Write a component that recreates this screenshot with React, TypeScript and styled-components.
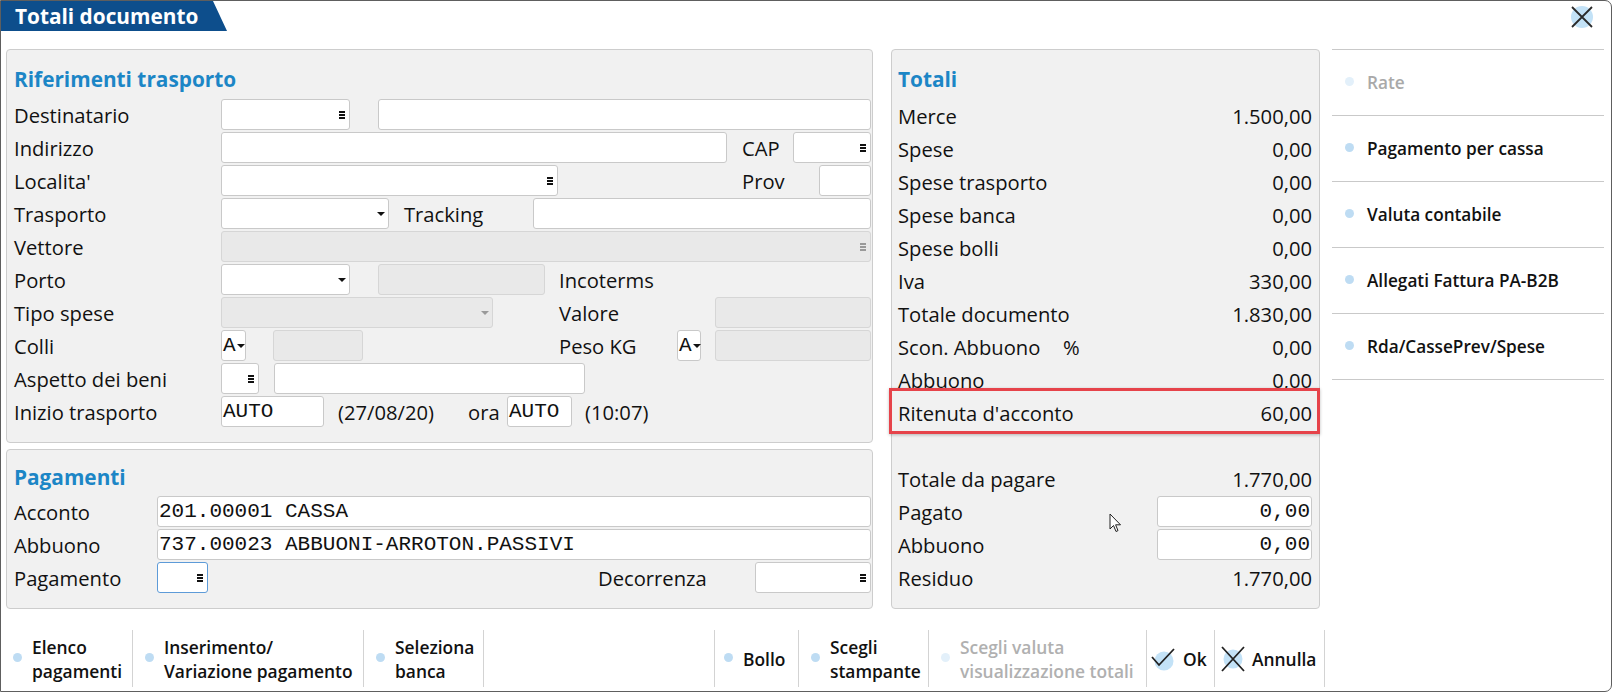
import React from 'react';
import styled, { createGlobalStyle, css } from 'styled-components';

const SANS = '"Open Sans", "Noto Sans", sans-serif';
const MONO = '"Liberation Mono", "DejaVu Sans Mono", monospace';
const BLUE = '#1c86c6';
const DOT = '#bedcf3';

const GlobalStyle = createGlobalStyle`
  html, body { margin: 0; padding: 0; background: #fff; }
  body { font-family: ${SANS}; color: #111; }
  #root { width: 1612px; height: 692px; }
`;

const Window = styled.div`
  box-sizing: border-box;
  width: 1612px;
  height: 692px;
  border: 1px solid #5e5e5e;
  border-radius: 0 7px 7px 0;
  background: #fff;
  display: flex;
  flex-direction: column;
`;

const Header = styled.div`
  height: 48px;
  display: flex;
  justify-content: space-between;
  align-items: flex-start;
`;

const TitleTab = styled.div`
  width: 226px;
  height: 30px;
  background: #0d4e8c;
  clip-path: polygon(0 0, 212px 0, 100% 100%, 0 100%);
  color: #fff;
  font-weight: 700;
  font-size: 20.8px;
  line-height: 30px;
  padding-left: 14px;
  box-sizing: border-box;
  white-space: nowrap;
`;

const CloseButton = styled.div`
  width: 24px;
  height: 24px;
  margin: 4px 17px 0 0;
`;

const Main = styled.div`
  height: 560px;
  display: flex;
  padding-left: 5px;
`;

const LeftColumn = styled.div`
  width: 867px;
  display: flex;
  flex-direction: column;
  gap: 6px;
`;

const Panel = styled.div<{ $h: number; $w?: number }>`
  box-sizing: border-box;
  height: ${({ $h }) => $h}px;
  ${({ $w }) => ($w ? `width: ${$w}px;` : '')}
  border: 1px solid #cdcdcd;
  border-radius: 4px;
  background: #f1f1f1;
  padding: 0 1px 0 7px;
  position: relative;
`;

const TotalsPanel = styled(Panel)`
  margin-left: 18px;
  padding: 0 7px 0 6px;
`;

const SectionTitle = styled.div<{ $tight?: boolean }>`
  color: ${BLUE};
  font-weight: 700;
  font-size: 20.8px;
  height: 28px;
  line-height: 28px;
  padding-top: ${({ $tight }) => ($tight ? 13 : 15)}px;
  margin-bottom: ${({ $tight }) => ($tight ? 5 : 6)}px;
`;

const Rows = styled.div`
  display: flex;
  flex-direction: column;
  gap: 2px;
`;

const Row = styled.div`
  display: flex;
  align-items: center;
  height: 31px;
`;

const Label = styled.div<{ $w?: number; $ml?: number }>`
  ${({ $w }) => ($w ? `width: ${$w}px;` : '')}
  ${({ $ml }) => ($ml ? `margin-left: ${$ml}px;` : '')}
  flex-shrink: 0;
  font-size: 20.2px;
  white-space: nowrap;
`;

const Box = styled.div<{ $w: number; $ml?: number; $off?: boolean; $focus?: boolean; $right?: boolean }>`
  box-sizing: border-box;
  width: ${({ $w }) => $w}px;
  ${({ $ml }) => ($ml ? `margin-left: ${$ml}px;` : '')}
  height: 31px;
  flex-shrink: 0;
  border: 1px solid #c9c9c9;
  border-radius: 3px;
  background: #fff;
  display: flex;
  align-items: center;
  justify-content: ${({ $right }) => ($right ? 'flex-end' : 'flex-start')};
  padding: 0 1px;
  font-family: ${MONO};
  font-size: 21px;
  color: #111;
  ${({ $off }) =>
    $off &&
    css`
      background: #e9e9e9;
      border-color: #d6d6d6;
      color: #9a9a9a;
    `}
  ${({ $focus }) =>
    $focus &&
    css`
      border-color: #5d9bd8;
    `}
`;

const Trail = styled.span`
  margin-left: auto;
  margin-right: 3px;
  display: flex;
`;

const Caret = styled.span<{ $tight?: boolean }>`
  display: flex;
  margin-left: ${({ $tight }) => ($tight ? '1px' : 'auto')};
  margin-right: ${({ $tight }) => ($tight ? 0 : 2)}px;
`;

const Lookup = ({ off }: { off?: boolean }) => (
  <Trail>
    <svg width="6" height="8" viewBox="0 0 6 8">
      <g fill={off ? '#9a9a9a' : '#111'}>
        <rect x="0" y="0" width="6" height="2" />
        <rect x="0" y="3" width="6" height="2" />
        <rect x="0" y="6" width="6" height="2" />
      </g>
    </svg>
  </Trail>
);

const Arrow = ({ off, tight }: { off?: boolean; tight?: boolean }) => (
  <Caret $tight={tight}>
    <svg width="8" height="4" viewBox="0 0 8 4">
      <polygon points="0,0 8,0 4,4" fill={off ? '#9a9a9a' : '#111'} />
    </svg>
  </Caret>
);

const Plain = styled.div<{ $w?: number; $ml?: number }>`
  ${({ $w }) => ($w ? `width: ${$w}px;` : '')}
  ${({ $ml }) => ($ml ? `margin-left: ${$ml}px;` : '')}
  flex-shrink: 0;
  font-size: 20.2px;
  white-space: nowrap;
`;

const TotalRow = styled.div<{ $mark?: boolean }>`
  height: 33px;
  display: flex;
  align-items: center;
  justify-content: space-between;
  font-size: 20.2px;
  position: relative;
  ${({ $mark }) =>
    $mark &&
    css`
      &::after {
        content: '';
        position: absolute;
        left: -9px;
        right: -8px;
        top: -8px;
        bottom: -5px;
        border: 3px solid #e6434a;
        box-shadow: 0 1px 3px rgba(0, 0, 0, 0.25);
      }
    `}
`;

const TotalLabel = styled.span`
  display: flex;
  white-space: nowrap;
`;

const Pct = styled.span`
  position: absolute;
  left: 165px;
`;

const Cursor = styled.div`
  position: absolute;
  left: 217px;
  top: 463px;
`;

const Menu = styled.div`
  width: 272px;
  margin-left: 12px;
  border-top: 1px solid #c9c9c9;
  align-self: flex-start;
`;

const MenuItem = styled.div<{ $off?: boolean }>`
  height: 65px;
  border-bottom: 1px solid #c9c9c9;
  display: flex;
  align-items: center;
  gap: 13px;
  padding-left: 13px;
  font-size: 17.2px;
  font-weight: 600;
  color: ${({ $off }) => ($off ? '#a9a9a9' : '#111')};
`;

const Dot = styled.span<{ $off?: boolean }>`
  width: 9px;
  height: 9px;
  border-radius: 50%;
  background: ${({ $off }) => ($off ? '#e3f0fa' : DOT)};
  flex-shrink: 0;
  margin-top: -3px;
`;

const Toolbar = styled.div`
  height: 57px;
  margin-top: 21px;
  display: flex;
`;

const ToolGroup = styled.div<{ $ml?: number }>`
  display: flex;
  ${({ $ml }) => ($ml ? `margin-left: ${$ml}px; border-left: 1px solid #d3d3d3;` : '')}
`;

const ToolItem = styled.div<{ $w: number; $off?: boolean; $pl?: number }>`
  box-sizing: border-box;
  width: ${({ $w }) => $w}px;
  border-right: 1px solid #d3d3d3;
  display: flex;
  align-items: center;
  gap: 10px;
  padding-left: ${({ $pl }) => $pl ?? 12}px;
  font-size: 17.4px;
  font-weight: 600;
  line-height: 24px;
  white-space: nowrap;
  color: ${({ $off }) => ($off ? '#b0b0b0' : '#111')};
`;

const IconGap = styled.span`
  display: flex;
  margin-right: -4px;
`;

const leftRows = (
  <Rows>
    <Row>
      <Label $w={207}>Destinatario</Label>
      <Box $w={129}><Lookup /></Box>
      <Box $w={493} $ml={28} />
    </Row>
    <Row>
      <Label $w={207}>Indirizzo</Label>
      <Box $w={506} />
      <Label $w={51} $ml={15}>CAP</Label>
      <Box $w={78}><Lookup /></Box>
    </Row>
    <Row>
      <Label $w={207}>Localita'</Label>
      <Box $w={337}><Lookup /></Box>
      <Label $w={77} $ml={184}>Prov</Label>
      <Box $w={52} />
    </Row>
    <Row>
      <Label $w={207}>Trasporto</Label>
      <Box $w={168}><Arrow /></Box>
      <Label $w={129} $ml={15}>Tracking</Label>
      <Box $w={338} />
    </Row>
    <Row>
      <Label $w={207}>Vettore</Label>
      <Box $w={650} $off><Lookup off /></Box>
    </Row>
    <Row>
      <Label $w={207}>Porto</Label>
      <Box $w={129}><Arrow /></Box>
      <Box $w={167} $ml={28} $off />
      <Label $ml={14}>Incoterms</Label>
    </Row>
    <Row>
      <Label $w={207}>Tipo spese</Label>
      <Box $w={272} $off><Arrow off /></Box>
      <Label $w={156} $ml={66}>Valore</Label>
      <Box $w={156} $off />
    </Row>
    <Row>
      <Label $w={207}>Colli</Label>
      <Box $w={25}>A<Arrow tight /></Box>
      <Box $w={90} $ml={27} $off />
      <Label $w={118} $ml={196}>Peso KG</Label>
      <Box $w={24}>A<Arrow tight /></Box>
      <Box $w={156} $ml={14} $off />
    </Row>
    <Row>
      <Label $w={207}>Aspetto dei beni</Label>
      <Box $w={38}><Lookup /></Box>
      <Box $w={311} $ml={15} />
    </Row>
    <Row>
      <Label $w={207}>Inizio trasporto</Label>
      <Box $w={103}>AUTO</Box>
      <Plain $w={130} $ml={14}>(27/08/20)</Plain>
      <Plain $w={39}>ora</Plain>
      <Box $w={65}>AUTO</Box>
      <Plain $ml={13}>(10:07)</Plain>
    </Row>
  </Rows>
);

const totals: [string, string][] = [
  ['Merce', '1.500,00'],
  ['Spese', '0,00'],
  ['Spese trasporto', '0,00'],
  ['Spese banca', '0,00'],
  ['Spese bolli', '0,00'],
  ['Iva', '330,00'],
  ['Totale documento', '1.830,00'],
];

const menu = [
  { label: 'Rate', off: true },
  { label: 'Pagamento per cassa' },
  { label: 'Valuta contabile' },
  { label: 'Allegati Fattura PA-B2B' },
  { label: 'Rda/CassePrev/Spese' },
];

export default function App() {
  return (
    <>
      <GlobalStyle />
      <Window>
        <Header>
          <TitleTab>Totali documento</TitleTab>
          <CloseButton>
            <svg width="24" height="24" viewBox="0 0 24 24">
              <circle cx="12" cy="12" r="11" fill="#c3e2f7" />
              <path d="M2 2 L22 22 M22 2 L2 22" stroke="#2a2a2a" strokeWidth="1.8" />
            </svg>
          </CloseButton>
        </Header>

        <Main>
          <LeftColumn>
            <Panel $h={394}>
              <SectionTitle>Riferimenti trasporto</SectionTitle>
              {leftRows}
            </Panel>
            <Panel $h={160}>
              <SectionTitle $tight>Pagamenti</SectionTitle>
              <Rows>
                <Row>
                  <Label $w={143}>Acconto</Label>
                  <Box $w={714}>201.00001 CASSA</Box>
                </Row>
                <Row>
                  <Label $w={143}>Abbuono</Label>
                  <Box $w={714}>737.00023 ABBUONI-ARROTON.PASSIVI</Box>
                </Row>
                <Row>
                  <Label $w={143}>Pagamento</Label>
                  <Box $w={51} $focus><Lookup /></Box>
                  <Label $w={157} $ml={390}>Decorrenza</Label>
                  <Box $w={116}><Lookup /></Box>
                </Row>
              </Rows>
            </Panel>
          </LeftColumn>

          <TotalsPanel $h={560} $w={429}>
            <SectionTitle>Totali</SectionTitle>
            {totals.map(([l, v]) => (
              <TotalRow key={l}>
                <TotalLabel>{l}</TotalLabel>
                <span>{v}</span>
              </TotalRow>
            ))}
            <TotalRow>
              <TotalLabel>Scon. Abbuono<Pct>%</Pct></TotalLabel>
              <span>0,00</span>
            </TotalRow>
            <TotalRow>
              <TotalLabel>Abbuono</TotalLabel>
              <span>0,00</span>
            </TotalRow>
            <TotalRow $mark>
              <TotalLabel>Ritenuta d'acconto</TotalLabel>
              <span>60,00</span>
            </TotalRow>
            <TotalRow />
            <TotalRow>
              <TotalLabel>Totale da pagare</TotalLabel>
              <span>1.770,00</span>
            </TotalRow>
            <TotalRow>
              <TotalLabel>Pagato</TotalLabel>
              <Box $w={155} $right>0,00</Box>
            </TotalRow>
            <TotalRow>
              <TotalLabel>Abbuono</TotalLabel>
              <Box $w={155} $right>0,00</Box>
            </TotalRow>
            <TotalRow>
              <TotalLabel>Residuo</TotalLabel>
              <span>1.770,00</span>
            </TotalRow>
            <Cursor>
              <svg width="13" height="20" viewBox="0 0 13 20">
                <path d="M1 1 L1 16 L4.5 12.5 L7 18.5 L9 17.6 L6.6 11.8 L11.5 11.8 Z" fill="#fff" stroke="#222" strokeWidth="1" strokeLinejoin="round" />
              </svg>
            </Cursor>
          </TotalsPanel>

          <Menu>
            {menu.map((m) => (
              <MenuItem key={m.label} $off={m.off}>
                <Dot $off={m.off} />
                {m.label}
              </MenuItem>
            ))}
          </Menu>
        </Main>

        <Toolbar>
          <ToolGroup>
            <ToolItem $w={132}><Dot /><span>Elenco<br />pagamenti</span></ToolItem>
            <ToolItem $w={231}><Dot /><span>Inserimento/<br />Variazione pagamento</span></ToolItem>
            <ToolItem $w={120}><Dot /><span>Seleziona<br />banca</span></ToolItem>
          </ToolGroup>
          <ToolGroup $ml={230}>
            <ToolItem $w={84} $pl={9}><Dot />Bollo</ToolItem>
            <ToolItem $w={130}><Dot /><span>Scegli<br />stampante</span></ToolItem>
            <ToolItem $w={218} $off><Dot $off /><span>Scegli valuta<br />visualizzazione totali</span></ToolItem>
            <ToolItem $w={68} $pl={2}>
              <IconGap>
                <svg width="28" height="26" viewBox="0 0 28 26">
                  <circle cx="15" cy="15" r="9.5" fill="#c3e2f7" />
                  <path d="M3 11 L10 19 L25 3" fill="none" stroke="#222" strokeWidth="1.8" />
                </svg>
              </IconGap>
              Ok
            </ToolItem>
            <ToolItem $w={110} $pl={5}>
              <IconGap>
                <svg width="26" height="28" viewBox="0 0 26 28">
                  <circle cx="13" cy="14" r="9.5" fill="#c3e2f7" />
                  <path d="M2 2 L24 26 M24 2 L2 26" stroke="#222" strokeWidth="1.8" />
                </svg>
              </IconGap>
              Annulla
            </ToolItem>
          </ToolGroup>
        </Toolbar>
      </Window>
    </>
  );
}
